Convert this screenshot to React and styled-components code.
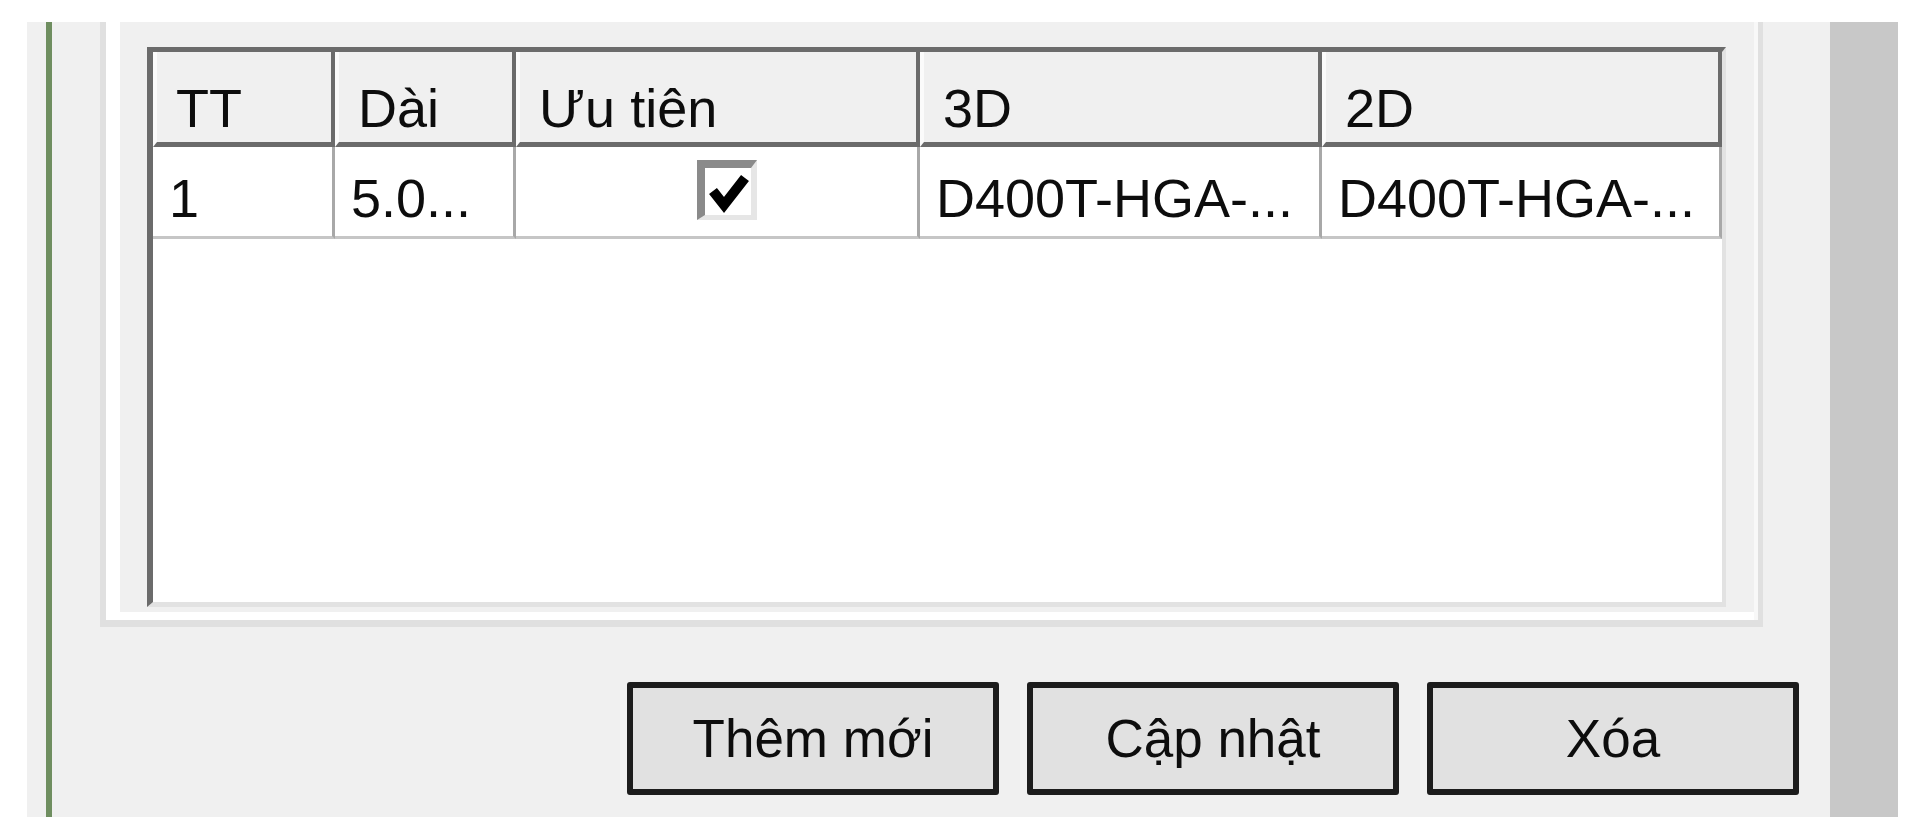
import React from 'react';
import styled, { createGlobalStyle } from 'styled-components';

const GlobalStyle = createGlobalStyle`
  html, body {
    margin: 0;
    padding: 0;
    background: #ffffff;
  }
  body {
    font-family: "Liberation Sans", Arial, sans-serif;
    color: #0d0d0d;
  }
`;

const Frame = styled.div`
  box-sizing: border-box;
  height: 100vh;
  display: flex;
  padding: 22px 22px 21px 27px;
  background: #ffffff;
`;

const Panel = styled.div`
  flex: 1;
  display: flex;
  padding-left: 19px;
  background: #f0f0f0;
`;

const ScrollTrack = styled.div`
  width: 68px;
  background: #c8c8c8;
`;

const Content = styled.div`
  flex: 1;
  display: flex;
  flex-direction: column;
  border-left: 6px solid #6f8e60;
  padding: 0 31px 21px 48px;
`;

const Group = styled.div`
  box-sizing: border-box;
  height: 605px;
  margin-right: 36px;
  padding: 25px 32px 12px 41px;
  border-left: 6px solid #e0e0e0;
  border-right: 5px solid #e0e0e0;
  border-bottom: 7px solid #e0e0e0;
  box-shadow: inset 14px 0 0 #ffffff, inset -4px 0 0 #f8f8f8, inset 0 -8px 0 #ffffff;
`;

const Grid = styled.div`
  box-sizing: border-box;
  height: 560px;
  background: #ffffff;
  border-top: 5px solid #6b6b6b;
  border-left: 6px solid #6b6b6b;
  border-right: 4px solid #e2e2e2;
  border-bottom: 5px solid #e2e2e2;
  display: grid;
  grid-template-columns: 182px 181px 404px 402px 1fr;
  grid-template-rows: 95px 92px;
  align-content: start;
`;

const HeadCell = styled.div`
  box-sizing: border-box;
  background: #f0f0f0;
  border-left: 4px solid #fbfbfb;
  border-right: 4px solid #6b6b6b;
  border-bottom: 5px solid #6b6b6b;
  padding: 25px 0 0 19px;
  font-size: 54px;
  line-height: 62px;
  white-space: nowrap;
  overflow: hidden;
`;

const Cell = styled.div`
  box-sizing: border-box;
  display: flex;
  justify-content: ${p => (p.$center ? 'center' : 'flex-start')};
  align-items: ${p => (p.$center ? 'center' : 'flex-start')};
  border-right: 3px solid #a8a8a8;
  border-bottom: 3px solid #c6c6c6;
  padding: ${p => (p.$center ? '0 0 4px 20px' : '20px 0 0 16px')};
  font-size: 54px;
  line-height: 62px;
  white-space: nowrap;
  overflow: hidden;
`;

const CheckBox = styled.div`
  box-sizing: border-box;
  width: 60px;
  height: 60px;
  background: #ffffff;
  border-top: 8px solid #8a8a8a;
  border-left: 8px solid #8a8a8a;
  border-right: 6px solid #e6e6e6;
  border-bottom: 5px solid #e6e6e6;
  display: flex;
`;

const ButtonRow = styled.div`
  display: flex;
  justify-content: flex-end;
  gap: 28px;
  margin-top: 55px;
`;

const Button = styled.button`
  box-sizing: border-box;
  width: 372px;
  height: 113px;
  border: 6px solid #1c1c1c;
  border-radius: 3px;
  background: #e1e1e1;
  font-family: "Liberation Sans", Arial, sans-serif;
  font-size: 53px;
  color: #0d0d0d;
  padding: 0;
`;

const columns = ['TT', 'Dài', 'Ưu tiên', '3D', '2D'];

const Check = () => (
  <CheckBox>
    <svg width="46" height="47" viewBox="0 0 46 47">
      <path d="M8 23 L19 37 L40 10" fill="none" stroke="#000" strokeWidth="10" strokeLinejoin="miter" />
    </svg>
  </CheckBox>
);

const App = () => {
  return (
    <>
      <GlobalStyle />
      <Frame>
        <Panel>
          <Content>
            <Group>
              <Grid>
                {columns.map(c => (
                  <HeadCell key={c}>{c}</HeadCell>
                ))}
                <Cell>1</Cell>
                <Cell>5.0...</Cell>
                <Cell $center>
                  <Check />
                </Cell>
                <Cell>D400T-HGA-...</Cell>
                <Cell>D400T-HGA-...</Cell>
              </Grid>
            </Group>
            <ButtonRow>
              <Button>Thêm mới</Button>
              <Button>Cập nhật</Button>
              <Button>Xóa</Button>
            </ButtonRow>
          </Content>
        </Panel>
        <ScrollTrack />
      </Frame>
    </>
  );
};

export default App;
